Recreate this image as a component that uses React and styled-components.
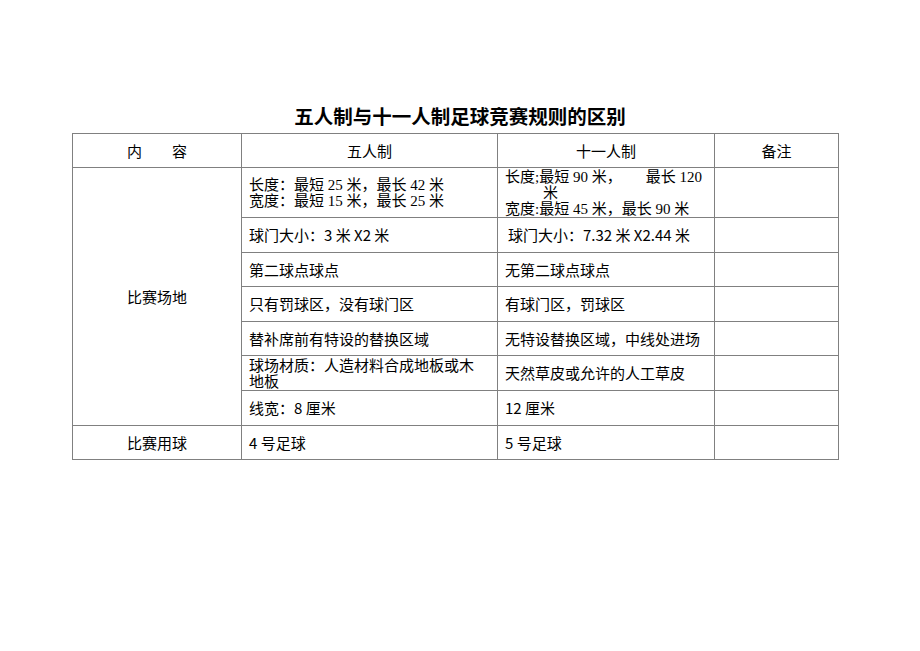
import React from 'react';
import styled, { createGlobalStyle } from 'styled-components';

const GlobalStyle = createGlobalStyle`
  html, body {
    margin: 0;
    padding: 0;
    background: #fff;
  }
  body {
    font-family: "Noto Sans CJK SC", sans-serif;
    color: #000;
  }
`;

const Page = styled.div`
  width: 920px;
  height: 651px;
  padding-top: 104px;
  box-sizing: border-box;
`;

const Title = styled.h1`
  margin: 0 0 5px;
  font-size: 19.5px;
  line-height: 24px;
  font-weight: 700;
  text-align: center;
`;

const Table = styled.table`
  margin-left: 72px;
  width: 766px;
  border-collapse: collapse;
  table-layout: fixed;
  font-size: 15px;
  line-height: 16px;
`;

const Row = styled.tr`
  height: ${(p) => p.$h}px;
`;

const Cell = styled.td`
  border: 1px solid #808080;
  padding: 0 7px;
  text-align: ${(p) => (p.$center ? 'center' : 'left')};
  vertical-align: middle;
  white-space: nowrap;
  font-family: ${(p) =>
    p.$serif
      ? '"Liberation Serif", "Noto Sans CJK SC", serif'
      : '"Noto Sans CJK SC", sans-serif'};
`;

const Line = styled.div`
  padding-left: ${(p) => p.$indent || 0}px;
`;

const Gap = styled.span`
  display: inline-block;
  width: ${(p) => p.$w}px;
`;

const App = () => {
  return (
    <Page>
      <GlobalStyle />
      <Title>五人制与十一人制足球竞赛规则的区别</Title>
      <Table>
        <colgroup>
          <col style={{ width: 169 }} />
          <col style={{ width: 256 }} />
          <col style={{ width: 217 }} />
          <col style={{ width: 124 }} />
        </colgroup>
        <tbody>
          <Row $h={34}>
            <Cell $center>内　　容</Cell>
            <Cell $center>五人制</Cell>
            <Cell $center>十一人制</Cell>
            <Cell $center>备注</Cell>
          </Row>
          <Row $h={50}>
            <Cell $center rowSpan={7}>比赛场地</Cell>
            <Cell $serif>
              <Line>长度：最短 25 米，最长 42 米</Line>
              <Line>宽度：最短 15 米，最长 25 米</Line>
            </Cell>
            <Cell $serif>
              <Line>
                长度;最短 90 米，<Gap $w={24} />最长 120
              </Line>
              <Line $indent={38}>米</Line>
              <Line>宽度:最短 45 米，最长 90 米</Line>
            </Cell>
            <Cell />
          </Row>
          <Row $h={35}>
            <Cell>球门大小：3 米 X2 米</Cell>
            <Cell>
              <Gap $w={3} />球门大小：7.32 米 X2.44 米
            </Cell>
            <Cell />
          </Row>
          <Row $h={34}>
            <Cell>第二球点球点</Cell>
            <Cell>无第二球点球点</Cell>
            <Cell />
          </Row>
          <Row $h={35}>
            <Cell>只有罚球区，没有球门区</Cell>
            <Cell>有球门区，罚球区</Cell>
            <Cell />
          </Row>
          <Row $h={34}>
            <Cell>替补席前有特设的替换区域</Cell>
            <Cell>无特设替换区域，中线处进场</Cell>
            <Cell />
          </Row>
          <Row $h={35}>
            <Cell>
              <Line>球场材质：人造材料合成地板或木</Line>
              <Line>地板</Line>
            </Cell>
            <Cell>天然草皮或允许的人工草皮</Cell>
            <Cell />
          </Row>
          <Row $h={35}>
            <Cell>线宽：8 厘米</Cell>
            <Cell>12 厘米</Cell>
            <Cell />
          </Row>
          <Row $h={34}>
            <Cell $center>比赛用球</Cell>
            <Cell>4 号足球</Cell>
            <Cell>5 号足球</Cell>
            <Cell />
          </Row>
        </tbody>
      </Table>
    </Page>
  );
};

export default App;
